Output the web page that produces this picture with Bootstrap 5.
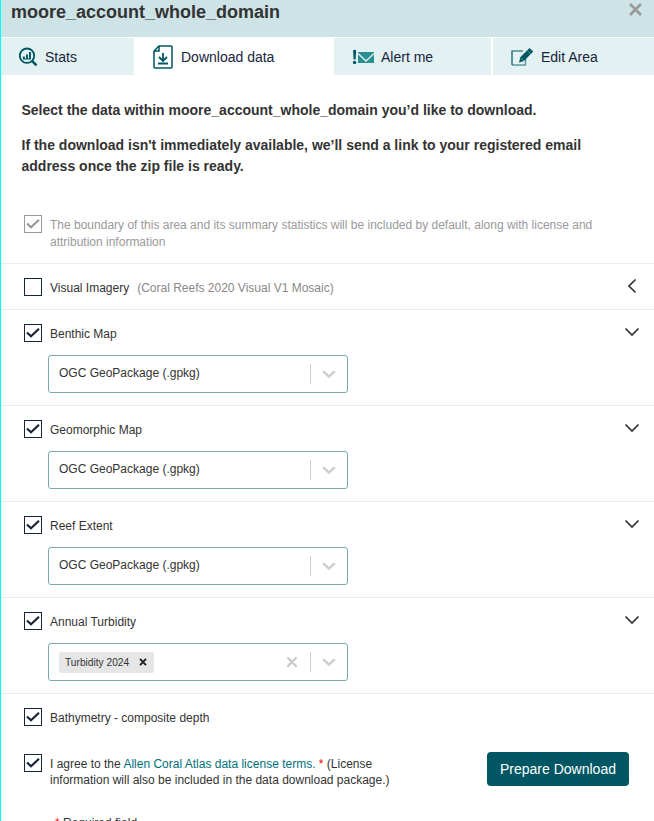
<!DOCTYPE html>
<html lang="en">
<head>
<meta charset="utf-8">
<meta name="viewport" content="width=device-width, initial-scale=1">
<title>Download data</title>
<link href="https://cdn.jsdelivr.net/npm/bootstrap@5.3.0/dist/css/bootstrap.min.css" rel="stylesheet">
<style>
body{font-family:"Liberation Sans",Arial,sans-serif;font-size:12px;line-height:17px;color:#333;height:821px;overflow:hidden;background:#fff}
svg{display:block;flex:none}
.panel{border-left:1px solid #0ff;height:821px;overflow:hidden}
.panel-head{height:37px;background:#cee3e5;padding:0 12px 0 10px}
.panel-head h1{font-size:18px;line-height:24px;font-weight:700;color:#333}
.panel-head svg{margin-top:3px}
.tabs{height:37px;margin-top:1px;font-size:14px;color:#17243c}
.tab{background:#e3f1f2;height:37px}
.tab span{padding-top:2px}
.tab-stats{width:133px;padding-left:18px;gap:7px}
.tab-down{width:200px;background:#fff;padding-left:19px;gap:8px}
.tab-alert{width:157px;padding-left:18px;gap:6px}
.tab-edit{width:161px;margin-left:2px;padding-left:18px;gap:8px}
.intro{font-size:14px;line-height:21px;font-weight:700;padding:25px 50px 0 20.5px;height:126px;color:#333}
.intro p{margin:0 0 14px}
.opt{border-bottom:1px solid #ececec;padding:14px 14px 0 23px}
.opt-std{height:46px}
.opt-tall{height:96px}
.opt-first{height:63px}
.box{width:18px;height:18px;border:1px solid #17243c;color:#17243c;flex:none;margin-right:8px}
.muted-row{color:#999}
.muted-row .box{border-color:#999;color:#999}
.lbl{padding-top:2px;margin-bottom:-1px}
.note{color:#888;margin-left:8px}
.pick{width:300px;height:38px;border:1px solid #7ba9b0;border-radius:3px;margin:13px 0 0 24px;padding-left:10px}
.val{margin-bottom:2px}
.sep{width:1px;height:20px;background:#ccc}
.clear-x{margin-right:13px}
.chip{background:#e6e6e6;border-radius:2px;height:21px;font-size:10.2px;padding:0 7px 0 6px;gap:10px}
.agree{padding:12px 25px 0 23px}
.agree .box{margin-top:2px}
.agree-text{line-height:16px;padding-top:4px}
.required{padding:27px 0 0 54px}
.terms{color:#007178}
.req{color:#f00}
.go{background:#005663;color:#fff;border-radius:4px;width:142px;height:34px;font-size:14px;line-height:34px;padding:0;border:0}
</style>
</head>
<body>
<svg width="0" height="0" class="d-none"><defs>
<symbol id="check" viewBox="0 0 16 16"><path d="M2 7.500 6 11.300 14 3.800" fill="none" stroke="currentColor" stroke-width="2.200"/></symbol>
<symbol id="down" viewBox="0 0 16 16"><path d="M1.500 4.500 8 11 14.500 4.500" fill="none" stroke="#333" stroke-width="1.700"/></symbol>
<symbol id="caret" viewBox="0 0 14 14"><path d="M2 4.900 7 9.600 12 4.900" fill="none" stroke="#ccc" stroke-width="2.400" stroke-linecap="round"/></symbol>
</defs></svg>
<main class="panel">
  <header class="panel-head d-flex justify-content-between align-items-start">
    <h1 class="m-0">moore_account_whole_domain</h1>
    <svg width="13" height="13" viewBox="0 0 13 13"><path d="M1 1 12 12M12 1 1 12" stroke="#999" stroke-width="2.600"/></svg>
  </header>
  <nav class="tabs d-flex">
    <div class="tab tab-stats d-flex align-items-center">
      <svg width="19" height="20" viewBox="0 0 19 20" fill="none" stroke="#005663"><circle cx="8" cy="8.700" r="7.200" stroke-width="1.800"/><path d="M13 13.800 17.500 18.300" stroke-width="2.600"/><path d="M4.900 9.500V12M8 7.500V12M11 5V12" stroke-width="1.900"/><path d="M4 12H12"/></svg>
      <span>Stats</span>
    </div>
    <div class="tab tab-down d-flex align-items-center">
      <svg width="20" height="24" viewBox="0 0 20 24" fill="none" stroke="#005663" stroke-width="1.500"><path d="M6 1H18Q19 1 19 2V22Q19 23 18 23H2Q1 23 1 22V6ZM6 1V6H1"/><path d="M10 8V15.500M6 12 10 16 14 12M5 18.500H15" stroke-width="1.800"/></svg>
      <span>Download data</span>
    </div>
    <div class="tab tab-alert d-flex align-items-center">
      <svg width="23" height="16" viewBox="0 0 23 16"><path d="M1 1.200Q2.600 .2 4.200 1.200L3.600 10.500H1.600Z" fill="#005663"/><circle cx="2.600" cy="13.500" r="1.700" fill="#005663"/><path d="M6 3H22V14H6Z" fill="#2b8e92"/><path d="M6 4.500 14 12 22 4.500" fill="none" stroke="#e3f1f2" stroke-width="1.300"/></svg>
      <span>Alert me</span>
    </div>
    <div class="tab tab-edit d-flex align-items-center">
      <svg width="22" height="20" viewBox="0 0 22 20"><path d="M1 18H14.500V12" fill="none" stroke="#5c99a0" stroke-width="1.500"/><path d="M1 18V4H12" fill="none" stroke="#005663" stroke-width="1.200"/><path d="M8 15.500 9.300 10.300 18.500 1 22.300 4.500 13 14Z" fill="#005663"/><path d="M9.500 10.500 13 14M16 3.500 19.500 7" stroke="#e3f1f2" stroke-width=".4"/></svg>
      <span>Edit Area</span>
    </div>
  </nav>
  <section class="intro">
    <p>Select the data within moore_account_whole_domain you’d like to download.</p>
    <p class="m-0">If the download isn't immediately available, we’ll send a link to your registered email<br>address once the zip file is ready.</p>
  </section>
  <div class="opt opt-first muted-row d-flex">
    <span class="box"><svg width="16" height="16"><use href="#check"/></svg></span>
    <span class="lbl">The boundary of this area and its summary statistics will be included by default, along with license and<br>attribution information</span>
  </div>
  <div class="opt opt-std d-flex">
    <span class="box"></span><span class="lbl">Visual Imagery</span><span class="lbl note">(Coral Reefs 2020 Visual V1 Mosaic)</span>
    <svg class="ms-auto" width="16" height="16" viewBox="0 0 16 16"><path d="M11.500 1.500 5 8 11.500 14.500" fill="none" stroke="#333" stroke-width="1.700"/></svg>
  </div>
  <div class="opt opt-tall">
    <div class="d-flex"><span class="box"><svg width="16" height="16"><use href="#check"/></svg></span><span class="lbl">Benthic Map</span><svg class="ms-auto" width="16" height="16"><use href="#down"/></svg></div>
    <div class="pick d-flex align-items-center"><span class="val">OGC GeoPackage (.gpkg)</span><span class="sep ms-auto"></span><svg class="mx-2" width="20" height="14"><use href="#caret"/></svg></div>
  </div>
  <div class="opt opt-tall">
    <div class="d-flex"><span class="box"><svg width="16" height="16"><use href="#check"/></svg></span><span class="lbl">Geomorphic Map</span><svg class="ms-auto" width="16" height="16"><use href="#down"/></svg></div>
    <div class="pick d-flex align-items-center"><span class="val">OGC GeoPackage (.gpkg)</span><span class="sep ms-auto"></span><svg class="mx-2" width="20" height="14"><use href="#caret"/></svg></div>
  </div>
  <div class="opt opt-tall">
    <div class="d-flex"><span class="box"><svg width="16" height="16"><use href="#check"/></svg></span><span class="lbl">Reef Extent</span><svg class="ms-auto" width="16" height="16"><use href="#down"/></svg></div>
    <div class="pick d-flex align-items-center"><span class="val">OGC GeoPackage (.gpkg)</span><span class="sep ms-auto"></span><svg class="mx-2" width="20" height="14"><use href="#caret"/></svg></div>
  </div>
  <div class="opt opt-tall">
    <div class="d-flex"><span class="box"><svg width="16" height="16"><use href="#check"/></svg></span><span class="lbl">Annual Turbidity</span><svg class="ms-auto" width="16" height="16"><use href="#down"/></svg></div>
    <div class="pick d-flex align-items-center">
      <span class="chip d-flex align-items-center"><span>Turbidity 2024</span><svg width="8" height="8" viewBox="0 0 8 8"><path d="M1 .8 7 7.200M7 .8 1 7.200" stroke="#222" stroke-width="1.900"/></svg></span>
      <svg class="ms-auto clear-x" width="10" height="10" viewBox="0 0 10 10"><path d="M1.200 1.200 8.800 8.800M8.800 1.200 1.200 8.800" stroke="#ccc" stroke-width="2.400" stroke-linecap="round"/></svg>
      <span class="sep"></span><svg class="mx-2" width="20" height="14"><use href="#caret"/></svg></div>
  </div>
  <div class="opt opt-std border-0 d-flex">
    <span class="box"><svg width="16" height="16"><use href="#check"/></svg></span><span class="lbl">Bathymetry - composite depth</span>
  </div>
  <div class="agree d-flex">
    <span class="box"><svg width="16" height="16"><use href="#check"/></svg></span>
    <div class="agree-text">I agree to the <span class="terms">Allen Coral Atlas data license terms.</span> <span class="req">*</span> (License<br>information will also be included in the data download package.)</div>
    <button class="btn go ms-auto" type="button">Prepare Download</button>
  </div>
  <div class="required"><span class="req">*</span> Required field</div>
</main>
<script src="https://cdn.jsdelivr.net/npm/bootstrap@5.3.0/dist/js/bootstrap.bundle.min.js"></script>
</body>
</html>
